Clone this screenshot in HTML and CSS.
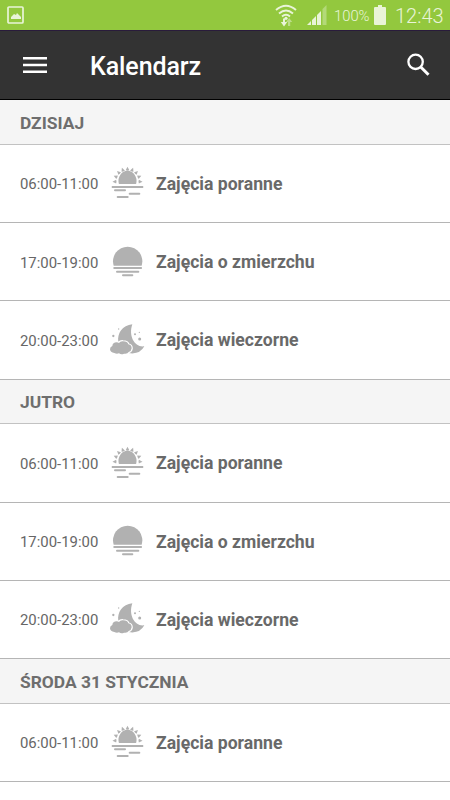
FILE: index.html
```html
<!DOCTYPE html>
<html lang="pl">
<head>
<meta charset="utf-8">
<title>Kalendarz</title>
<link rel="stylesheet" href="styles.css">
</head>
<body>
<svg class="sprite" aria-hidden="true">
  <symbol id="morning" viewBox="27 30 108 108">
    <path d="M56 84a27 31 0 1 1 53 0q0 3-2 3H58q-2 0-2-3z"/>
    <path d="M77 46l5.500-11 5.500 11q-5.500 2-11 0z"/>
    <path d="M77 46l5.500-11 5.500 11q-5.500 2-11 0z" transform="rotate(22 82.500 80)"/>
    <path d="M77 46l5.500-11 5.500 11q-5.500 2-11 0z" transform="rotate(44 82.500 80)"/>
    <path d="M77 46l5.500-11 5.500 11q-5.500 2-11 0z" transform="rotate(67 82.500 80)"/>
    <path d="M77 46l5.500-11 5.500 11q-5.500 2-11 0z" transform="rotate(90 82.500 80)"/>
    <path d="M77 46l5.500-11 5.500 11q-5.500 2-11 0z" transform="rotate(-22 82.500 80)"/>
    <path d="M77 46l5.500-11 5.500 11q-5.500 2-11 0z" transform="rotate(-44 82.500 80)"/>
    <path d="M77 46l5.500-11 5.500 11q-5.500 2-11 0z" transform="rotate(-67 82.500 80)"/>
    <path d="M77 46l5.500-11 5.500 11q-5.500 2-11 0z" transform="rotate(-90 82.500 80)"/>
    <rect x="35" y="93" width="95" height="6" rx="2"/>
    <rect x="42" y="103" width="36" height="6" rx="3"/>
    <rect x="86" y="113" width="35" height="6" rx="3"/>
    <rect x="50" y="123" width="36" height="6" rx="3"/>
  </symbol>
  <symbol id="dusk" viewBox="27 25 108 108">
    <path d="M41 90a44 44 0 1 1 84 0z"/>
    <rect x="40" y="94" width="86" height="6" rx="2"/>
    <rect x="48" y="105" width="70" height="6" rx="3"/>
    <rect x="66" y="116" width="34" height="6" rx="3"/>
  </symbol>
  <symbol id="evening" viewBox="27 35 108 108">
    <path d="M97 42C67 45 51 69 55 95L85 128Q119 134 133 108C106 113 84 79 97 42z"/>
    <path class="cloud" d="M43 128q-12-1-13-11q0-7 7-10q1-11 13-11q4 0 7 2q4-6 12-5q14 0 16 9q10 2 10 12q-1 9-9 11q-4 7-14 5q-8 4-15-1q-7 3-14-1z"/>
    <circle cx="56" cy="56" r="2"/><circle cx="40" cy="77" r="3.500"/>
    <circle cx="105" cy="72" r="3"/><circle cx="118" cy="66" r="2"/><circle cx="119" cy="86" r="4.500"/>
  </symbol>
</svg>

<header>
  <div class="status">
    <svg class="picture" viewBox="0 0 17 18"><rect x="1" y="1" width="15" height="16" rx="1" fill="none" stroke="#e9f4d8" stroke-width="1.700"/><path d="M4 13V11l3-3 2 1 1-2 4 4v2z" fill="#e9f4d8"/></svg>
    <svg class="wifi" viewBox="0 0 22 23"><g fill="none" stroke="#e9f4d8" stroke-width="1.900"><path d="M1 6q10-8.500 20 0M4 9.500q7-6 14 0M7 12.500q4-3.500 8 0"/></g><circle cx="11" cy="14.300" r="1.600" fill="#e9f4d8"/><path d="M8 14.500h2V18h2.200L9 22.500 5.800 18H8z" fill="#e9f4d8"/><path d="M13 22v-4h-2l3.200-4 3 4h-2v4z" fill="#bddd8a"/></svg>
    <svg class="signal" viewBox="0 0 21 21"><path d="M1 20l4-4v4zM6 20v-5l4-4v9zM11 20V10l4-4v14z" fill="#e9f4d8"/><path d="M16.500 20V4l4-4v20z" fill="#b3d978"/></svg>
    <span class="percent">100%</span>
    <svg class="battery" viewBox="0 0 12 20"><path d="M4 0h4v2h3q1 0 1 1v16q0 1-1 1H1q-1 0-1-1V3q0-1 1-1h3z" fill="#e9f4d8"/></svg>
    <span class="clock">12:43</span>
  </div>
  <div class="appbar">
    <svg class="menu" viewBox="0 0 24 16"><path d="M0 1.300h24M0 8h24M0 14.700h24" stroke="#fff" stroke-width="2.500"/></svg>
    <h1>Kalendarz</h1>
    <svg class="search" viewBox="0 0 24 24"><circle cx="9.600" cy="8.800" r="7.200" fill="none" stroke="#fff" stroke-width="2.300"/><path d="M14.500 13.800l8 8" stroke="#fff" stroke-width="3"/></svg>
  </div>
</header>

<main>
  <section>
    <h2>DZISIAJ</h2>
    <div class="row"><span class="time">06:00-11:00</span><svg class="icon"><use href="#morning"/></svg><span class="name">Zajęcia poranne</span></div>
    <div class="row"><span class="time">17:00-19:00</span><svg class="icon"><use href="#dusk"/></svg><span class="name">Zajęcia o zmierzchu</span></div>
    <div class="row"><span class="time">20:00-23:00</span><svg class="icon"><use href="#evening"/></svg><span class="name">Zajęcia wieczorne</span></div>
  </section>
  <section>
    <h2>JUTRO</h2>
    <div class="row"><span class="time">06:00-11:00</span><svg class="icon"><use href="#morning"/></svg><span class="name">Zajęcia poranne</span></div>
    <div class="row"><span class="time">17:00-19:00</span><svg class="icon"><use href="#dusk"/></svg><span class="name">Zajęcia o zmierzchu</span></div>
    <div class="row"><span class="time">20:00-23:00</span><svg class="icon"><use href="#evening"/></svg><span class="name">Zajęcia wieczorne</span></div>
  </section>
  <section>
    <h2>ŚRODA 31 STYCZNIA</h2>
    <div class="row"><span class="time">06:00-11:00</span><svg class="icon"><use href="#morning"/></svg><span class="name">Zajęcia poranne</span></div>
  </section>
</main>
</body>
</html>
```
FILE: styles.css
```css
* { box-sizing: border-box; }
body {
  margin: 0;
  height: 800px;
  overflow: hidden;
  background: #fff;
  font-family: Roboto, sans-serif;
}
.sprite { display: none; }
.cloud { stroke: #fff; stroke-width: 7px; paint-order: stroke; }
.status {
  display: flex;
  align-items: center;
  height: 30px;
  padding: 0 6px 0 7px;
  background: #93c83e;
  color: #e9f4d8;
}
.picture { width: 17px; height: 18px; margin-right: auto; }
.wifi { width: 22px; height: 23px; }
.signal { width: 21px; height: 21px; margin-left: 9px; }
.percent { margin-left: 7px; width: 36px; font-size: 14.8px; font-weight: 300; white-space: nowrap; padding-top: 2px; }
.battery { width: 12px; height: 20px; margin-left: 4px; }
.clock { margin-left: 9px; width: 49px; font-size: 20px; font-weight: 300; padding-top: 2px; }
.appbar {
  display: flex;
  align-items: center;
  height: 70px;
  padding: 0 20px 0 23px;
  background: #333;
  border-top: 1px solid #291b3b;
  border-bottom: 1px solid #000;
}
.menu { width: 24px; height: 16px; }
h1 {
  flex: 1;
  margin: 0 0 0 43px;
  padding-top: 2px;
  color: #fff;
  font-size: 25px;
  font-weight: 500;
  letter-spacing: -0.1px;
}
.search { width: 24px; height: 24px; }
h2 {
  display: flex;
  align-items: center;
  height: 44.6px;
  margin: 0;
  padding: 2px 20px 0;
  background: #f5f5f5;
  border-bottom: 1px solid #c2c2c2;
  color: #6e6e6e;
  font-size: 17.4px;
  font-weight: 700;
}
.row {
  display: flex;
  align-items: center;
  height: 78.33px;
  padding: 0 20px;
  border-bottom: 1px solid #b5b5b5;
}
.time { width: 89px; padding-top: 2px; color: #666; font-size: 14.9px; }
.icon { width: 36px; height: 36px; fill: #b1b1b1; }
.name { margin-left: 11px; padding-top: 1px; color: #696969; font-size: 17.6px; font-weight: 700; }
```
